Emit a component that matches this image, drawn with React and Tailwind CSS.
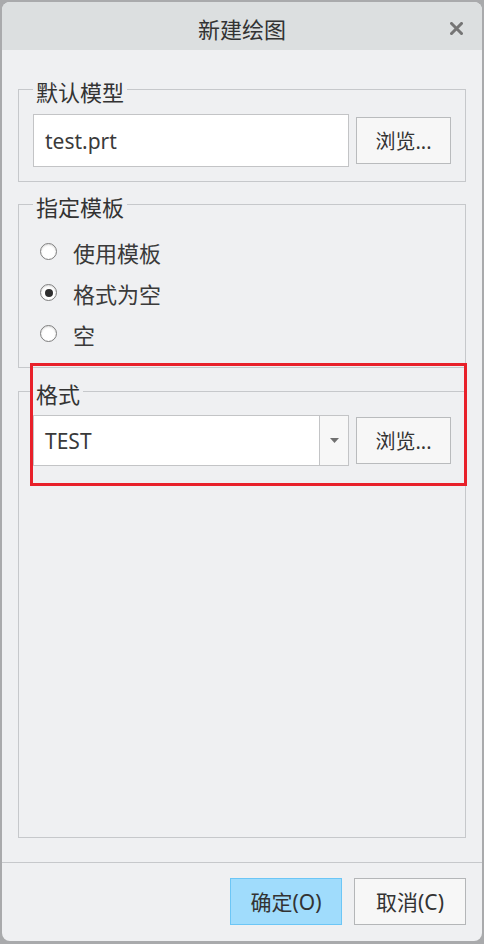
const FONT = "font-['Noto_Sans','Noto_Sans_CJK_SC',sans-serif]";

function Radio({ checked, label }) {
  return (
    <label className="flex h-[41px] items-center">
      <span className="ml-[7px] flex h-[17px] w-[17px] items-center justify-center rounded-full border border-[#7d7d7d] bg-white shadow-[inset_0_1px_2px_rgba(0,0,0,0.15)]">
        {checked && <span className="h-[8px] w-[8px] rounded-full bg-[#2f2f2f]" />}
      </span>
      <span className="ml-[16px] pt-[2px] text-[22px] leading-[28px] text-[#3a3a3a]">{label}</span>
    </label>
  );
}

function BrowseButton() {
  return (
    <button className="h-[47px] w-[95px] shrink-0 border border-[#b9bbbd] bg-[#f7f7f7] pt-[2px] text-[20px] leading-[26px] text-[#333]">
      浏览...
    </button>
  );
}

function Group({ title, className = "", children }) {
  return (
    <fieldset className={`border border-[#c6c8cb] px-[14px] ${className}`}>
      <legend className="h-[28px] px-[3px] pt-[3px] text-[22px] leading-[28px] text-[#333]">{title}</legend>
      {children}
    </fieldset>
  );
}

export default function App() {
  return (
    <div className={`relative h-[944px] w-[484px] bg-[#a9aaac] px-[2px] pt-[2px] ${FONT}`}>
      <div className="flex h-[939px] flex-col overflow-hidden rounded-[8px] bg-[#eff0f2]">
        {/* title bar */}
        <div className="relative flex h-[48px] shrink-0 items-center justify-center bg-[#dcdfe0] pt-[6px]">
          <span className="text-[22px] leading-[28px] text-[#333]">新建绘图</span>
          <svg className="absolute right-[19px] top-[20px]" width="13" height="13" viewBox="0 0 13 13">
            <path d="M1.5 1.5 L11.5 11.5 M11.5 1.5 L1.5 11.5" stroke="#757575" strokeWidth="3" strokeLinecap="square" />
          </svg>
        </div>

        {/* body */}
        <div className="flex flex-1 flex-col px-[16px] pb-[24px] pt-[25px]">
          <Group title="默认模型" className="pb-[14px]">
            <div className="mt-[11px] flex items-center gap-[7px]">
              <div className="flex h-[53px] flex-1 items-center border border-[#c3c4c6] bg-white pl-[11px] pt-[3px] text-[21px] text-[#3a3a3a]">
                test.prt
              </div>
              <BrowseButton />
            </div>
          </Group>

          <Group title="指定模板" className="mt-[8px] pb-[13px] pt-[13px]">
            <div className="flex flex-col">
              <Radio label="使用模板" />
              <Radio label="格式为空" checked />
              <Radio label="空" />
            </div>
          </Group>

          <Group title="格式" className="mt-[9px] flex-1">
            <div className="mt-[10px] flex items-center gap-[7px]">
              <div className="flex h-[51px] flex-1 border border-[#c3c4c6] bg-white">
                <div className="flex flex-1 items-center pl-[11px] pt-[3px] text-[21px] text-[#3a3a3a]">TEST</div>
                <div className="flex w-[29px] items-center justify-center border-l border-[#c3c4c6] bg-[#f7f7f7]">
                  <svg width="9" height="5" viewBox="0 0 9 5">
                    <path d="M0 0 H9 L4.5 5 Z" fill="#707070" />
                  </svg>
                </div>
              </div>
              <BrowseButton />
            </div>
          </Group>
        </div>

        {/* footer */}
        <div className="flex h-[79px] shrink-0 justify-end gap-[12px] border-t border-[#c6c8cb] pr-[16px] pt-[15px]">
          <button className="h-[47px] w-[112px] border border-[#6cc6f6] bg-[#a0dcfc] pt-[2px] text-[21px] text-[#333]">
            确定(O)
          </button>
          <button className="h-[47px] w-[112px] border border-[#b4b6b8] bg-[#f7f7f7] pt-[2px] text-[21px] text-[#333]">
            取消(C)
          </button>
        </div>
      </div>

      {/* red highlight annotation */}
      <div className="pointer-events-none absolute left-[30px] top-[363px] h-[123px] w-[437px] border-[3px] border-[#e8202a]" />
    </div>
  );
}
